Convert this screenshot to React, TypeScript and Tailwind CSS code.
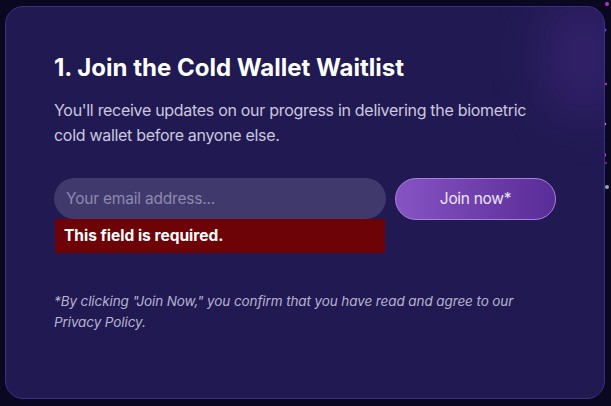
import React from 'react';

const dots = [
  { x: 4, y: 4, r: 2, c: '#c026d3' },
  { x: 11, y: 4, r: 2, c: '#a21caf' },
  { x: 18, y: 3, r: 2.5, c: '#9333ea' },
  { x: 26, y: 3, r: 2, c: '#4338ca' },
  { x: 2, y: 30, r: 1.5, c: '#4f46e5' },
  { x: 3, y: 84, r: 1, c: '#d946ef' },
  { x: 2, y: 124, r: 1.2, c: '#e879f9' },
  { x: 1, y: 144, r: 1.2, c: '#c026d3' },
  { x: 1, y: 155, r: 2, c: '#d946ef' },
  { x: 3, y: 163, r: 1, c: '#a21caf' },
  { x: 4, y: 187, r: 2, c: '#9ca3af' },
  { x: 0, y: 230, r: 1, c: '#6b7280' },
];

const App = () => {
  return (
    <div className="relative w-[611px] h-[406px] bg-[#0a0720] overflow-hidden font-['Inter',sans-serif]">
      {/* decorative dots on the right edge */}
      <svg className="absolute right-0 top-0" width="8" height="406">
        {dots.map((d, i) => (
          <circle key={i} cx={d.x} cy={d.y} r={d.r} fill={d.c} />
        ))}
      </svg>

      <div className="relative ml-[5px] mt-[6px] w-[600px] h-[393px] rounded-[18px] border border-[#3a2f8c] bg-[#211a52] px-[48px] pt-[45px] overflow-hidden">
        <div className="absolute right-[-20px] top-[-10px] w-[80px] h-[120px] rounded-full bg-[#5b2d9e]/30 blur-xl" />

        <h2 className="relative text-[24px] font-bold leading-[32px] text-white">
          1. Join the Cold Wallet Waitlist
        </h2>
        <p className="relative mt-[14px] w-[490px] text-[16px] leading-[25px] text-[#cbc7df] tracking-[-0.3px]">
          You'll receive updates on our progress in delivering the biometric cold wallet before anyone else.
        </p>

        <div className="relative mt-[30px] flex gap-[9px]">
          <div className="w-[332px]">
            <div className="flex h-[41px] items-center rounded-full bg-[#403a6c] px-[12px]">
              <span className="text-[15.5px] text-[#8d88ae] tracking-[-0.2px]">Your email address...</span>
            </div>
            <div className="mx-px flex h-[34px] items-center bg-[#6d0306] px-[9px]">
              <span className="text-[15.5px] font-bold text-white">This field is required.</span>
            </div>
          </div>
          <button className="flex h-[42px] w-[161px] items-center justify-center rounded-full border border-[#a580dc] bg-gradient-to-r from-[#8653c3] to-[#5a2c97] text-[15.5px] text-[#ece6f7] tracking-[-0.3px]">
            Join now*
          </button>
        </div>

        <p className="relative mt-[38px] w-[490px] text-[13.5px] italic leading-[21px] text-[#b8b3d1] tracking-[-0.1px]">
          *By clicking "Join Now," you confirm that you have read and agree to our Privacy Policy.
        </p>
      </div>
    </div>
  );
};

export default App;
